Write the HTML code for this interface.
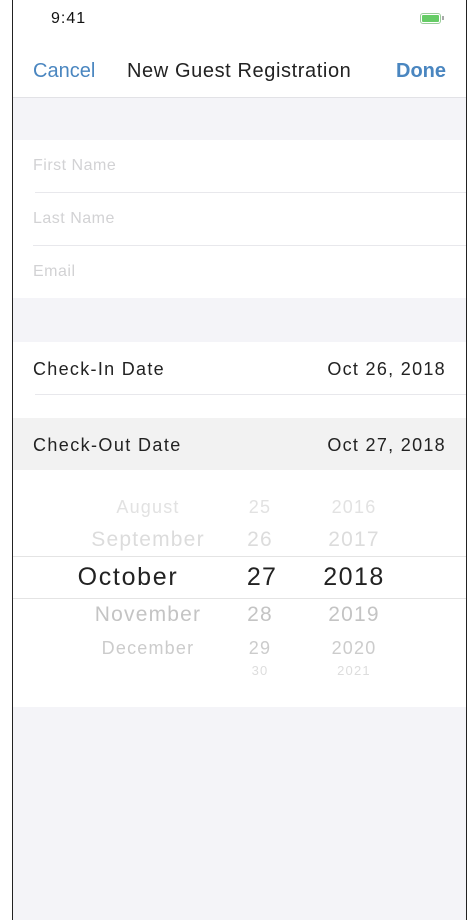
<!DOCTYPE html>
<html><head><style>
*{margin:0;padding:0;box-sizing:border-box}
body{width:472px;height:920px;background:#fff;font-family:"Liberation Sans",sans-serif;position:relative;overflow:hidden}
.frame{position:absolute;left:12px;top:0;width:455px;height:920px;border-left:1.5px solid #222;border-right:1.5px solid #222;background:#f4f4f8}
.a{position:absolute;left:0;right:0}
.t{position:absolute;white-space:nowrap}
.sep{position:absolute;height:1px;background:#e8e8ec;right:0}
.pk{position:absolute;text-align:center;white-space:nowrap;letter-spacing:1.2px}
</style></head><body>
<div class="frame">
<div class="a" style="top:0;height:98px;background:#fff;border-bottom:1px solid #e2e2e6"></div>
<div class="t" style="left:38px;top:10px;font-size:16px;color:#111;letter-spacing:1px">9:41</div>
<div style="position:absolute;left:407px;top:13px;width:21px;height:11px;border:1px solid #9c9;border-radius:3px;padding:1px"><div style="width:100%;height:100%;background:#6c6;border-radius:1px"></div></div>
<div style="position:absolute;left:429px;top:16px;width:2px;height:4px;background:#aaa"></div>
<div class="t" style="left:20px;top:60px;font-size:20px;color:#4a86c0">Cancel</div>
<div class="t" style="left:114px;top:60px;font-size:20px;color:#222;letter-spacing:0.6px">New Guest Registration</div>
<div class="t" style="left:383px;top:60px;font-size:20px;color:#4a86c0;font-weight:bold">Done</div>

<div class="a" style="top:140px;height:158px;background:#fff"></div>
<div class="t" style="left:20px;top:157px;font-size:16px;color:#d2d2d4;letter-spacing:0.5px">First Name</div>
<div class="sep" style="left:22px;top:192px"></div>
<div class="t" style="left:20px;top:210px;font-size:16px;color:#d2d2d4;letter-spacing:0.5px">Last Name</div>
<div class="sep" style="left:20px;top:245px"></div>
<div class="t" style="left:20px;top:263px;font-size:16px;color:#d2d2d4;letter-spacing:0.5px">Email</div>

<div class="a" style="top:342px;height:365px;background:#fff"></div>
<div class="t" style="left:20px;top:359px;font-size:18px;color:#222;letter-spacing:1.3px">Check-In Date</div>
<div class="t" style="right:20px;top:359px;font-size:18px;color:#222;letter-spacing:1.3px">Oct 26, 2018</div>
<div class="sep" style="left:22px;top:394px"></div>
<div class="a" style="top:418px;height:52px;background:#f2f2f2"></div>
<div class="t" style="left:20px;top:435px;font-size:18px;color:#222;letter-spacing:1.4px">Check-Out Date</div>
<div class="t" style="right:20px;top:435px;font-size:18px;color:#222;letter-spacing:1.3px">Oct 27, 2018</div>
<div class="sep" style="left:0;top:556px;background:#e4e4e4"></div>
<div class="sep" style="left:0;top:598px;background:#e4e4e4"></div>

<div class="pk" style="left:50px;width:170px;top:497px;font-size:18px;color:#e2e2e2">August</div>
<div class="pk" style="left:220px;width:54px;top:497px;font-size:18px;color:#e2e2e2">25</div>
<div class="pk" style="left:296px;width:90px;top:497px;font-size:18px;color:#e2e2e2">2016</div>
<div class="pk" style="left:50px;width:170px;top:528px;font-size:21px;color:#dcdcdc">September</div>
<div class="pk" style="left:220px;width:54px;top:528px;font-size:21px;color:#dcdcdc">26</div>
<div class="pk" style="left:296px;width:90px;top:528px;font-size:21px;color:#dcdcdc">2017</div>
<div class="pk" style="left:30px;width:170px;top:563px;font-size:25px;color:#222;letter-spacing:1.7px">October</div>
<div class="pk" style="left:222px;width:54px;top:563px;font-size:25px;color:#222">27</div>
<div class="pk" style="left:296px;width:90px;top:563px;font-size:25px;color:#222;letter-spacing:1.5px">2018</div>
<div class="pk" style="left:50px;width:170px;top:603px;font-size:21px;color:#c4c4c4">November</div>
<div class="pk" style="left:220px;width:54px;top:603px;font-size:21px;color:#c4c4c4">28</div>
<div class="pk" style="left:296px;width:90px;top:603px;font-size:21px;color:#c4c4c4">2019</div>
<div class="pk" style="left:50px;width:170px;top:638px;font-size:18px;color:#ccc">December</div>
<div class="pk" style="left:220px;width:54px;top:638px;font-size:18px;color:#ccc">29</div>
<div class="pk" style="left:296px;width:90px;top:638px;font-size:18px;color:#ccc">2020</div>
<div class="pk" style="left:220px;width:54px;top:663px;font-size:13px;color:#ddd">30</div>
<div class="pk" style="left:296px;width:90px;top:663px;font-size:13px;color:#ddd">2021</div>
</div>
</body></html>
